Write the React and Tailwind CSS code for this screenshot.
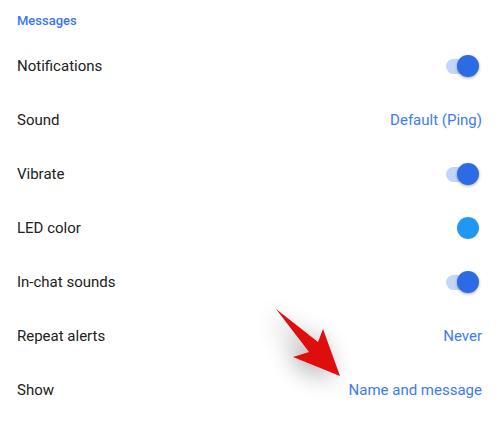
import React from 'react';

const Toggle = () => (
  <div className="relative w-[33px] h-[24px] flex items-center mr-[3px]">
    <div className="w-[28px] h-[15px] rounded-full bg-[#c3d5fa]" />
    <div className="absolute right-0 top-[1px] w-[22px] h-[22px] rounded-full bg-[#2d6be4] shadow-[0_1px_3px_rgba(0,0,0,0.35)]" />
  </div>
);

const rows = [
  { label: 'Notifications', right: <Toggle /> },
  { label: 'Sound', right: 'Default (Ping)' },
  { label: 'Vibrate', right: <Toggle /> },
  {
    label: 'LED color',
    right: <div className="w-[22px] h-[22px] rounded-full bg-[#2196f3] mr-[3px]" />,
  },
  { label: 'In-chat sounds', right: <Toggle /> },
  { label: 'Repeat alerts', right: 'Never' },
  { label: 'Show', right: 'Name and message' },
];

const App = () => {
  return (
    <div className="relative w-[500px] h-[421px] bg-white overflow-hidden font-['Roboto','Liberation_Sans',sans-serif]">
      {/* section header */}
      <div className="h-[39px] pl-[17px] pt-[13px] text-[13px] leading-[16px] font-medium text-[#3a77ef]">
        Messages
      </div>

      {rows.map((r) => (
        <div key={r.label} className="h-[54px] flex items-center justify-between pl-[17px] pr-[18px]">
          <span className="text-[15px] text-[#212121]">{r.label}</span>
          {typeof r.right === 'string' ? (
            <span className="text-[15px] text-[#3d7bf0]">{r.right}</span>
          ) : (
            r.right
          )}
        </div>
      ))}

      {/* red arrow annotation */}
      <svg className="absolute left-0 top-0 pointer-events-none" width="500" height="421">
        <defs>
          <filter id="shadow" x="-100%" y="-100%" width="300%" height="300%">
            <feGaussianBlur in="SourceAlpha" stdDeviation="12" />
            <feOffset dx="-6" dy="4" />
            <feComponentTransfer>
              <feFuncA type="linear" slope="0.35" />
            </feComponentTransfer>
            <feMerge>
              <feMergeNode />
              <feMergeNode in="SourceGraphic" />
            </feMerge>
          </filter>
        </defs>
        <polygon
          points="276,309 318,342 323,329 340,376 293,357 309,352"
          fill="#e00b0b"
          filter="url(#shadow)"
        />
      </svg>
    </div>
  );
};

export default App;
